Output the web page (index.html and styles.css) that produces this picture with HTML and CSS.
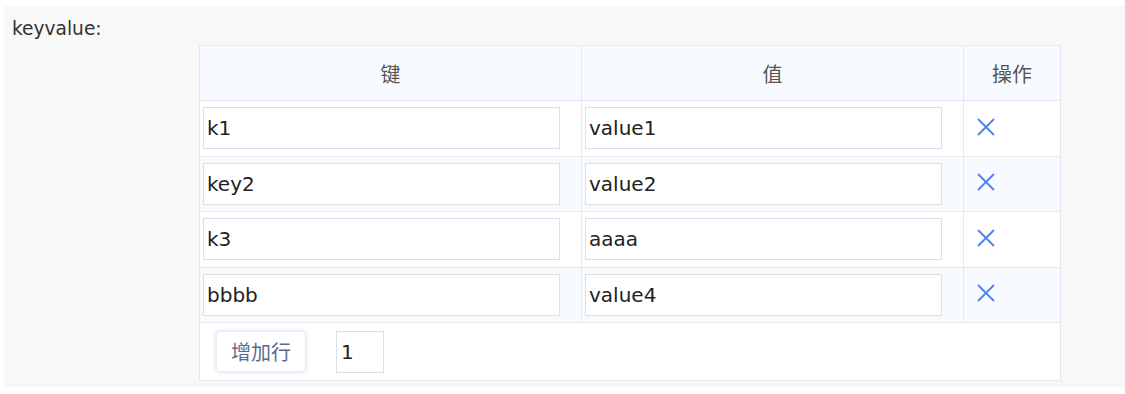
FILE: index.html
```html
<!DOCTYPE html>
<html lang="zh-CN">
<head>
    <meta charset="UTF-8">
    <meta name="viewport" content="width=device-width, initial-scale=1.0">
    <title>keyvalue</title>
    <link rel="stylesheet" href="styles.css">
</head>
<body>
    <div class="panel">
        <div class="label">keyvalue:</div>
        <table class="kv-table">
            <colgroup>
                <col class="col-key">
                <col class="col-value">
                <col class="col-op">
            </colgroup>
            <thead>
                <tr>
                    <th>键</th>
                    <th>值</th>
                    <th>操作</th>
                </tr>
            </thead>
            <tbody>
                <tr>
                    <td><input class="cell-input" type="text" value="k1"></td>
                    <td><input class="cell-input" type="text" value="value1"></td>
                    <td class="op"><button class="del" title="删除"><svg width="18" height="18" viewBox="0 0 18 18"><path d="M1 1L17 17M17 1L1 17" stroke="#4d80f0" stroke-width="1.8" fill="none"/></svg></button></td>
                </tr>
                <tr class="alt">
                    <td><input class="cell-input" type="text" value="key2"></td>
                    <td><input class="cell-input" type="text" value="value2"></td>
                    <td class="op"><button class="del" title="删除"><svg width="18" height="18" viewBox="0 0 18 18"><path d="M1 1L17 17M17 1L1 17" stroke="#4d80f0" stroke-width="1.8" fill="none"/></svg></button></td>
                </tr>
                <tr>
                    <td><input class="cell-input" type="text" value="k3"></td>
                    <td><input class="cell-input" type="text" value="aaaa"></td>
                    <td class="op"><button class="del" title="删除"><svg width="18" height="18" viewBox="0 0 18 18"><path d="M1 1L17 17M17 1L1 17" stroke="#4d80f0" stroke-width="1.8" fill="none"/></svg></button></td>
                </tr>
                <tr class="alt">
                    <td><input class="cell-input" type="text" value="bbbb"></td>
                    <td><input class="cell-input" type="text" value="value4"></td>
                    <td class="op"><button class="del" title="删除"><svg width="18" height="18" viewBox="0 0 18 18"><path d="M1 1L17 17M17 1L1 17" stroke="#4d80f0" stroke-width="1.8" fill="none"/></svg></button></td>
                </tr>
                <tr>
                    <td colspan="3" class="footer">
                        <div class="actions">
                            <button class="add-btn">增加行</button>
                            <input class="count" type="text" value="1">
                        </div>
                    </td>
                </tr>
            </tbody>
        </table>
    </div>
</body>
</html>
```

FILE: styles.css
```css
body {
    margin: 0;
    padding: 6px 0 0 4px;
    font-family: "DejaVu Sans", "Noto Sans CJK SC", sans-serif;
    color: #333;
}
.panel {
    background: #f8f8f8;
    padding: 10px 0 6px 8px;
}
.label {
    font-size: 18.6px;
    line-height: 26px;
    color: #333;
}
.kv-table {
    margin: 3px 0 0 187px;
    border-collapse: collapse;
    background: #fff;
    table-layout: fixed;
    width: 861px;
}
.col-key,
.col-value {
    width: 382px;
}
.col-op {
    width: 97px;
}
.kv-table th,
.kv-table td {
    border: 1px solid #e6e9f0;
    padding: 0 3px;
}
.kv-table th {
    height: 54px;
    background: #f7fbff;
    font-family: "Noto Sans CJK SC", sans-serif;
    font-weight: normal;
    font-size: 20px;
    color: #555;
    text-align: center;
}
.kv-table td {
    height: 54.5px;
}
.kv-table tr.alt td {
    background: #f7fbff;
}
.cell-input {
    box-sizing: border-box;
    width: 357px;
    height: 42px;
    border: 1px solid #dcdfe6;
    padding: 1px 3px;
    font-family: "DejaVu Sans", sans-serif;
    font-size: 20px;
    color: #222;
    background: #fff;
    display: block;
}
.op {
    padding-left: 13px !important;
}
.del {
    border: none;
    background: none;
    padding: 0;
    display: block;
    cursor: pointer;
}
.footer {
    height: 57px !important;
    padding: 0 !important;
}
.actions {
    display: flex;
    align-items: center;
    gap: 30px;
    padding: 0 0 0 16px;
}
.add-btn {
    box-sizing: border-box;
    width: 90px;
    height: 41px;
    background: #fff;
    border: 1px solid #e8ebf3;
    border-radius: 3px;
    box-shadow: 0 0 4px rgba(110, 130, 210, 0.3);
    font-family: "Noto Sans CJK SC", sans-serif;
    font-size: 20px;
    color: #5b6a8e;
    padding: 0;
    cursor: pointer;
}
.count {
    box-sizing: border-box;
    width: 48px;
    height: 42px;
    border: 1px solid #dcdfe6;
    padding: 1px 4px;
    font-family: "DejaVu Sans", sans-serif;
    font-size: 20px;
    color: #222;
}
```
